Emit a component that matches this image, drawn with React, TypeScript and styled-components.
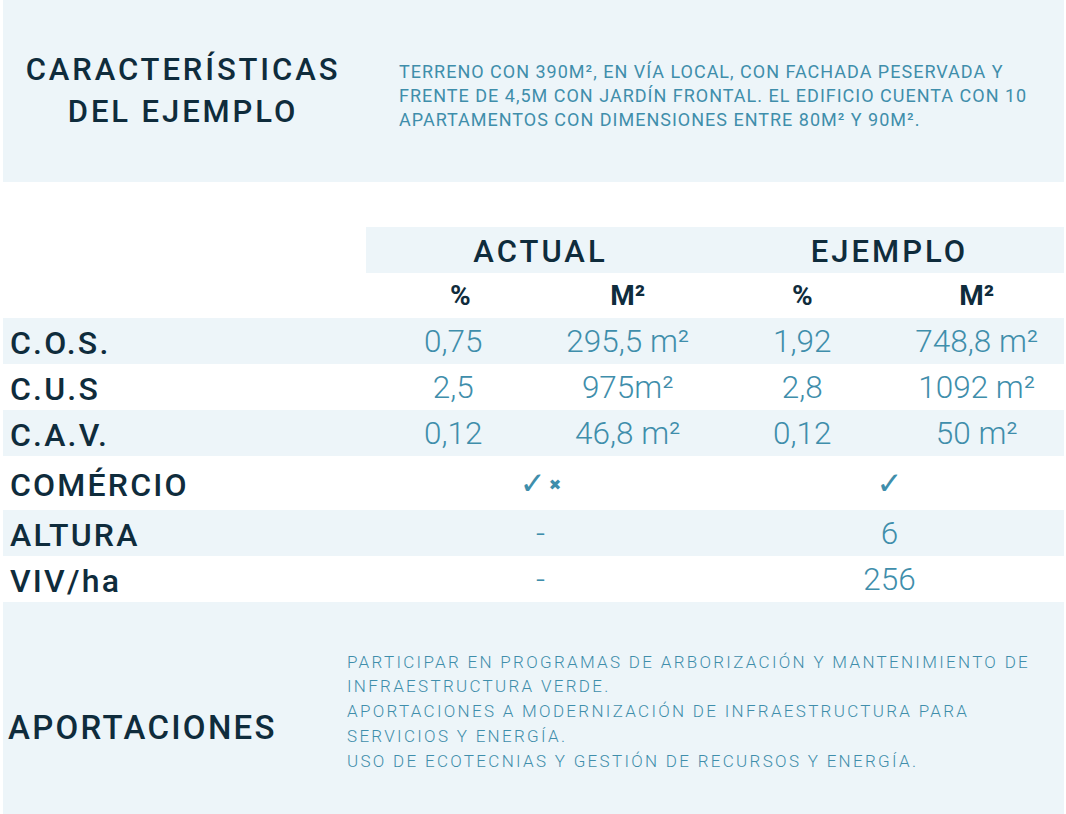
import React from "react";
import styled, { createGlobalStyle } from "styled-components";

const LIGHT = "#edf5f9";
const DARK = "#0f2c3c";
const TEAL = "#3f8eab";

const GlobalStyle = createGlobalStyle`
  html, body { margin: 0; padding: 0; background: #ffffff; }
  body { font-family: Roboto, "Noto Sans", sans-serif; }
`;

const Page = styled.div`
  width: 1066px;
  height: 814px;
  display: flex;
  flex-direction: column;
  overflow: hidden;
  background: #ffffff;
`;

const InfoPanel = styled.section`
  margin-left: 3px;
  width: 1061px;
  height: 182px;
  flex: none;
  background: ${LIGHT};
  display: flex;
  align-items: center;
`;

const PanelTitle = styled.h1`
  margin: 0;
  width: 360px;
  flex: none;
  text-align: center;
  font-size: 31px;
  font-weight: 500;
  line-height: 42px;
  letter-spacing: 2.9px;
  color: ${DARK};
`;

const Description = styled.p`
  margin: 10px 0 0 36px;
  font-size: 18px;
  font-weight: 400;
  line-height: 24px;
  letter-spacing: 1px;
  color: ${TEAL};
  white-space: nowrap;
`;

const Table = styled.div`
  margin-top: 45px;
  display: flex;
  flex-direction: column;
`;

const Row = styled.div<{ $shaded?: boolean; $height: number }>`
  margin-left: 3px;
  width: 1061px;
  height: ${(p) => p.$height}px;
  display: grid;
  grid-template-columns: 363px repeat(4, 174.5px);
  align-items: stretch;
  background: ${(p) => (p.$shaded ? LIGHT : "transparent")};
`;

const GroupHead = styled.div`
  grid-column: span 2;
  background: ${LIGHT};
  display: flex;
  align-items: center;
  justify-content: center;
  padding-top: 2px;
  font-size: 31px;
  font-weight: 500;
  letter-spacing: 3px;
  color: ${DARK};
`;

const SubHead = styled.div<{ $shift?: number }>`
  display: flex;
  align-items: center;
  justify-content: center;
  padding-left: ${(p) => p.$shift ?? 0}px;
  font-size: 28px;
  font-weight: 700;
  color: ${DARK};
`;

const Label = styled.div`
  display: flex;
  align-items: center;
  padding-left: 7px;
  padding-top: 3px;
  font-size: 32px;
  font-weight: 500;
  letter-spacing: 2.2px;
  color: ${DARK};
  white-space: nowrap;
`;

const Value = styled.div<{ $span?: number }>`
  grid-column: span ${(p) => p.$span ?? 1};
  display: flex;
  align-items: center;
  justify-content: center;
  font-size: 31.5px;
  font-weight: 300;
  color: ${TEAL};
  white-space: nowrap;
`;

const Mark = styled.span<{ $small?: boolean }>`
  font-family: "DejaVu Sans", sans-serif;
  font-size: ${(p) => (p.$small ? "15px" : "31px")};
  font-weight: ${(p) => (p.$small ? 700 : 400)};
  line-height: 1;
  color: ${TEAL};
  margin: ${(p) => (p.$small ? "5px 0 0 3px" : "0")};
`;

const ContribPanel = styled.section`
  margin-left: 3px;
  width: 1061px;
  flex: 1;
  background: ${LIGHT};
  display: flex;
  align-items: center;
`;

const ContribTitle = styled.h2`
  margin: 38px 0 0 0;
  width: 339px;
  padding-left: 5px;
  flex: none;
  font-size: 33px;
  font-weight: 500;
  letter-spacing: 2.3px;
  color: ${DARK};
`;

const ContribText = styled.p`
  margin: 7px 0 0 0;
  font-size: 17px;
  font-weight: 300;
  line-height: 24.7px;
  letter-spacing: 2.3px;
  color: ${TEAL};
  white-space: nowrap;
`;

type DataRow = { label: string; cells: string[] };

const numeric: DataRow[] = [
  { label: "C.O.S.", cells: ["0,75", "295,5 m²", "1,92", "748,8 m²"] },
  { label: "C.U.S", cells: ["2,5", "975m²", "2,8", "1092 m²"] },
  { label: "C.A.V.", cells: ["0,12", "46,8 m²", "0,12", "50 m²"] },
];

export default function App() {
  return (
    <Page>
      <GlobalStyle />
      <InfoPanel>
        <PanelTitle>
          CARACTERÍSTICAS
          <br />
          DEL EJEMPLO
        </PanelTitle>
        <Description>
          TERRENO CON 390M², EN VÍA LOCAL, CON FACHADA PESERVADA Y
          <br />
          FRENTE DE 4,5M CON JARDÍN FRONTAL. EL EDIFICIO CUENTA CON 10
          <br />
          APARTAMENTOS CON DIMENSIONES ENTRE 80M² Y 90M².
        </Description>
      </InfoPanel>

      <Table>
        <Row $height={46}>
          <div />
          <GroupHead>ACTUAL</GroupHead>
          <GroupHead>EJEMPLO</GroupHead>
        </Row>
        <Row $height={45}>
          <div />
          <SubHead $shift={14}>%</SubHead>
          <SubHead>M²</SubHead>
          <SubHead>%</SubHead>
          <SubHead>M²</SubHead>
        </Row>
        {numeric.map((r, i) => (
          <Row key={r.label} $height={46} $shaded={i % 2 === 0}>
            <Label>{r.label}</Label>
            {r.cells.map((c, j) => (
              <Value key={j}>{c}</Value>
            ))}
          </Row>
        ))}
        <Row $height={54}>
          <Label>COMÉRCIO</Label>
          <Value $span={2}>
            <Mark>✓</Mark>
            <Mark $small>✖</Mark>
          </Value>
          <Value $span={2}>
            <Mark>✓</Mark>
          </Value>
        </Row>
        <Row $height={46} $shaded>
          <Label>ALTURA</Label>
          <Value $span={2}>-</Value>
          <Value $span={2}>6</Value>
        </Row>
        <Row $height={46}>
          <Label>VIV/ha</Label>
          <Value $span={2}>-</Value>
          <Value $span={2}>256</Value>
        </Row>
      </Table>

      <ContribPanel>
        <ContribTitle>APORTACIONES</ContribTitle>
        <ContribText>
          PARTICIPAR EN PROGRAMAS DE ARBORIZACIÓN Y MANTENIMIENTO DE
          <br />
          INFRAESTRUCTURA VERDE.
          <br />
          APORTACIONES A MODERNIZACIÓN DE INFRAESTRUCTURA PARA
          <br />
          SERVICIOS Y ENERGÍA.
          <br />
          USO DE ECOTECNIAS Y GESTIÓN DE RECURSOS Y ENERGÍA.
        </ContribText>
      </ContribPanel>
    </Page>
  );
}
